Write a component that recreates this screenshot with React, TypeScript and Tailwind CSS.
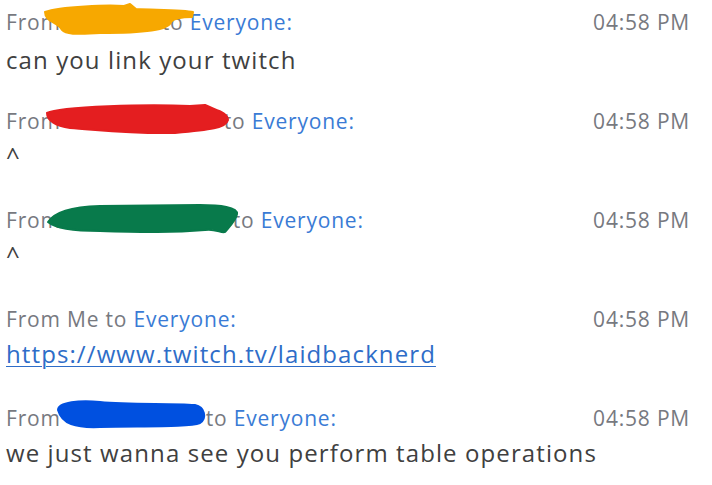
import React from "react";

const FONT = { fontFamily: '"Open Sans", "Noto Sans", sans-serif' };

type Msg = {
  name: string;
  nameW: number;
  body: React.ReactNode;
  scribble?: React.ReactNode;
};

function Scribble({ d, color }: { d: string; color: string }) {
  return (
    <svg
      className="absolute left-[-6px] top-[-7px] pointer-events-none"
      width="260"
      height="44"
      viewBox="0 0 260 44"
    >
      <path d={d} fill={color} stroke={color} strokeWidth="2" strokeLinejoin="round" />
    </svg>
  );
}

const msgs: Msg[] = [
  {
    name: "",
    nameW: 101,
    body: "can you link your twitch",
    scribble: (
      <Scribble
        color="#f7a800"
        d="M45 12 C 60 6, 110 5, 124 6 L 130 4 L 136 9 C 160 10, 185 10, 193 12 L 192 17 C 180 17, 174 18, 171 22 C 169 30, 145 33, 100 33 C 78 34, 66 35, 62 30 C 58 22, 45 22, 45 12 Z"
      />
    ),
  },
  {
    name: "",
    nameW: 163,
    body: "^",
    scribble: (
      <Scribble
        color="#e41e20"
        d="M47 14 C 60 7, 150 5, 190 7 L 205 6 C 215 11, 228 13, 228 21 C 226 29, 210 31, 175 34 C 130 35, 100 31, 70 29 C 55 27, 47 21, 47 14 Z"
      />
    ),
  },
  {
    name: "",
    nameW: 172,
    body: "^",
    scribble: (
      <Scribble
        color="#087a4b"
        d="M48 24 C 55 14, 70 9, 100 8 L 200 7 C 220 7, 238 9, 237 16 C 236 22, 230 28, 225 34 C 222 36, 215 30, 205 32 C 170 35, 140 34, 100 33 C 75 33, 55 30, 48 24 Z"
      />
    ),
  },
  {
    name: "Me",
    nameW: 0,
    body: (
      <a className="text-[#2e6dc8] underline decoration-1 underline-offset-[3px]" href="#">
        https://www.twitch.tv/laidbacknerd
      </a>
    ),
  },
  {
    name: "",
    nameW: 145,
    body: "we just wanna see you perform table operations",
    scribble: (
      <Scribble
        color="#0050e0"
        d="M58 14 C 58 6, 80 4, 100 6 C 130 9, 170 7, 195 9 C 205 11, 207 22, 200 27 C 190 31, 150 30, 100 31 C 75 32, 62 28, 58 14 Z"
      />
    ),
  },
];

export default function App() {
  return (
    <div className="w-[712px] h-[485px] bg-white overflow-hidden pt-[7px] pl-[6px] pr-[22px]" style={FONT}>
      <div className="flex flex-col gap-[29px]">
        {msgs.map((m, i) => (
          <div key={i} className="flex flex-col">
            <div className="relative flex items-center justify-between h-[30px] text-[21px] leading-[30px] tracking-[0.8px] text-[#77797f]">
              <div className="whitespace-nowrap">
                {m.name ? (
                  <>From {m.name} to </>
                ) : (
                  <>
                    From<span className="inline-block" style={{ width: m.nameW }} />to{" "}
                  </>
                )}
                <span className="text-[#3a7bd5]">Everyone:</span>
              </div>
              <div className="whitespace-nowrap">04:58 PM</div>
              {m.scribble}
            </div>
            <div
              className={
                i === 0
                  ? "h-[40px] pt-[3px] text-[24px] leading-[40px] tracking-[1.1px] text-[#404040] whitespace-nowrap"
                  : "h-[40px] text-[24px] leading-[40px] tracking-[1.1px] text-[#404040] whitespace-nowrap"
              }
            >
              {m.body}
            </div>
          </div>
        ))}
      </div>
    </div>
  );
}
